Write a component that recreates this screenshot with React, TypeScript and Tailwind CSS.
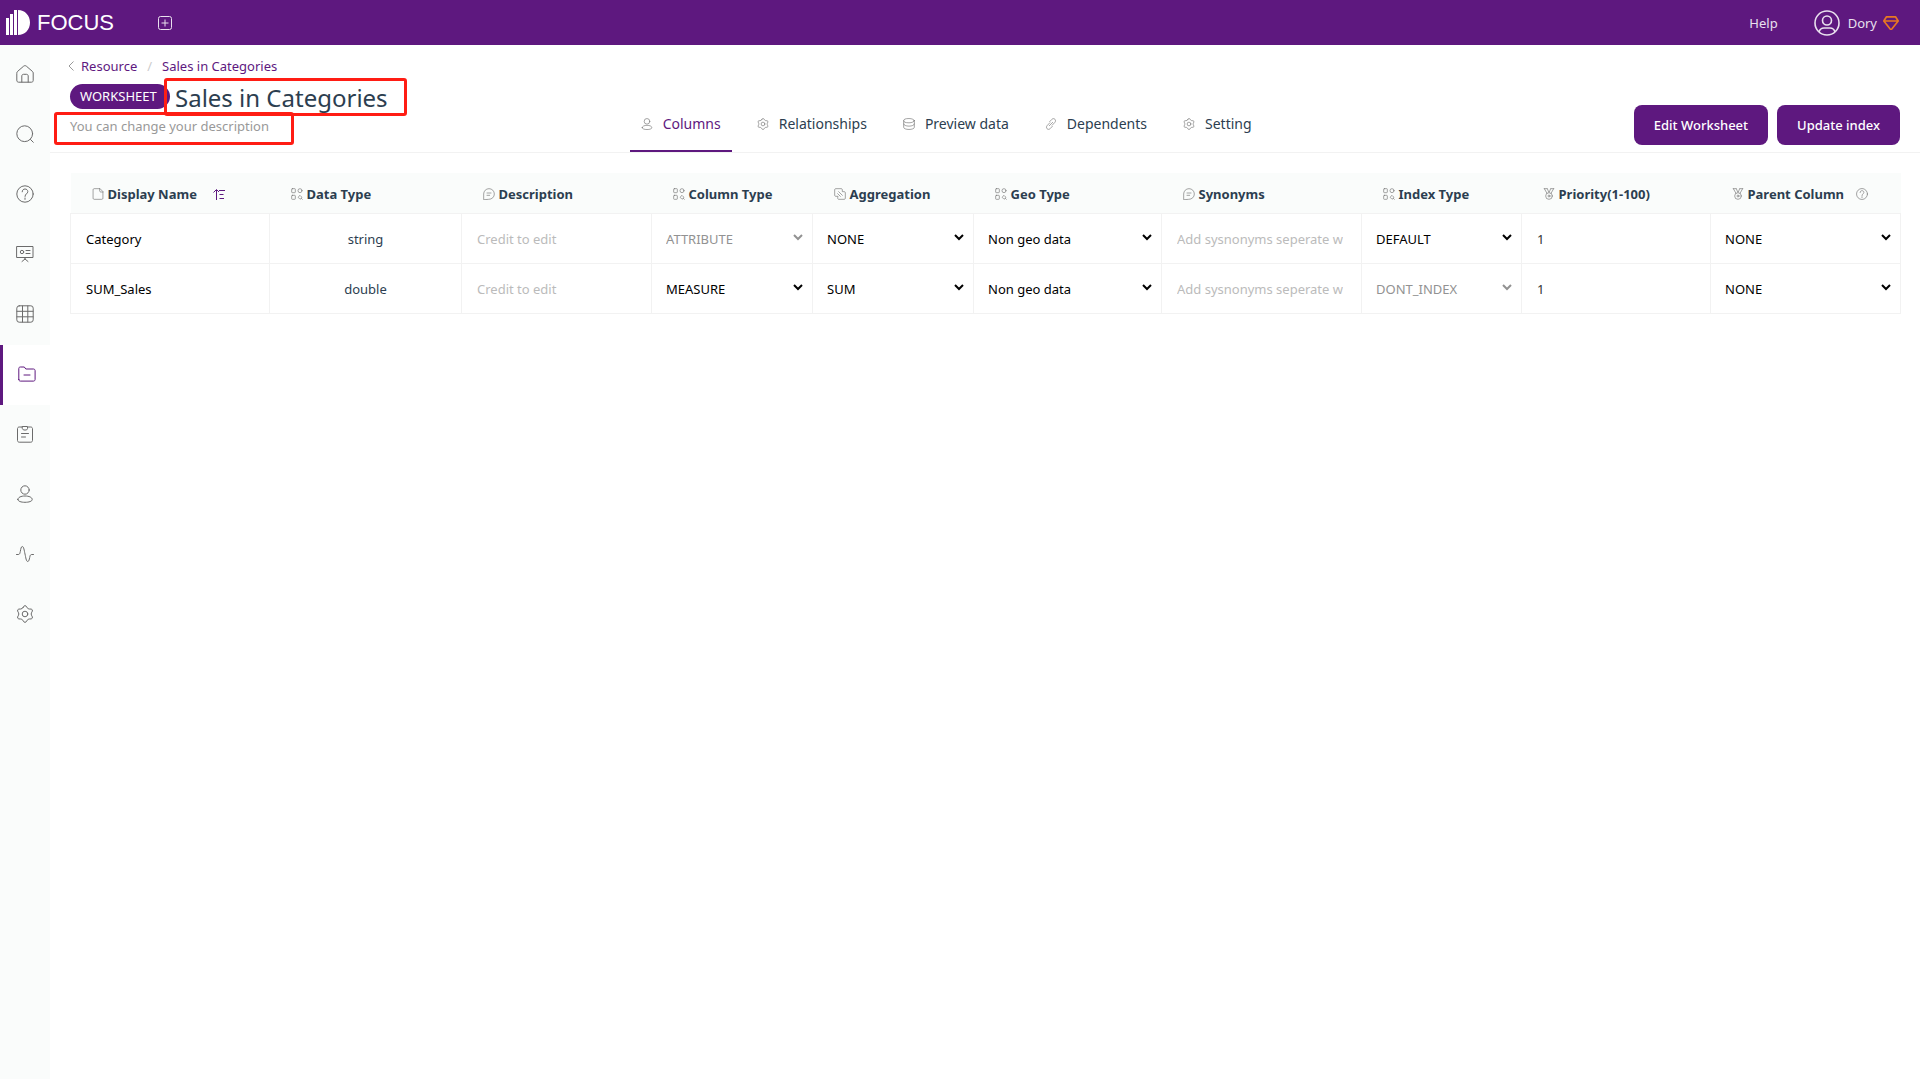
import type { ReactNode } from "react";

type IconName =
  | "home"
  | "search"
  | "help"
  | "board"
  | "grid"
  | "folder"
  | "clipboard"
  | "user"
  | "pulse"
  | "gear"
  | "database"
  | "link"
  | "file"
  | "shapes"
  | "chat"
  | "copy"
  | "medal";

// すべて 18x18 のグリッドで描く
const iconShapes: Record<IconName, ReactNode> = {
  home: (
    <>
      <path d="M.8 8c0-.7.3-1.2.8-1.6l6-5.2c.8-.7 2-.7 2.800 0l6 5.200c.5.400.8.900.8 1.600v7.500c0 1-.7 1.700-1.700 1.700h-13c-1 0-1.700-.7-1.700-1.700z" />
      <path d="M5.800 17v-6c0-1 .7-1.700 1.700-1.700h3c1 0 1.700.7 1.700 1.700v6" />
    </>
  ),
  search: (
    <>
      <circle cx="8.700" cy="8.700" r="7.900" />
      <path d="M14.500 14.500l2.800 2.800" />
    </>
  ),
  help: (
    <>
      <circle cx="9" cy="9" r="8.200" />
      <path d="M6.200 6.800c0-1.700 1.200-2.800 2.800-2.800s2.800 1.100 2.800 2.600c0 2.200-2.800 2.200-2.800 4.800M9 13v1.400" />
    </>
  ),
  board: (
    <>
      <path d="M1 1.500h16v11H1zM9 12.500v2M9 14l-3 2.500M9 14l3 2.500" />
      <circle cx="6" cy="7" r="1.700" />
      <path d="M10 5.500h4M10 8.500h4" />
    </>
  ),
  grid: (
    <>
      <rect x=".8" y=".8" width="16.400" height="16.400" rx="2.400" />
      <path d="M6.500 1v16M11.800 1v16M1 6.300h16M1 11.800h16" />
    </>
  ),
  folder: (
    <>
      <path d="M.8 14.500v-11c0-.9.6-1.500 1.500-1.500h4l1.500 2h7.700c.9 0 1.600.7 1.600 1.600v8.900c0 .9-.7 1.600-1.600 1.600h-13.200c-.9 0-1.500-.7-1.500-1.600z" />
      <path d="M6 10h6" />
    </>
  ),
  clipboard: (
    <>
      <path d="M6 2H3.200C2.300 2 1.500 2.700 1.500 3.600v12c0 .9.800 1.600 1.700 1.600h11.600c.9 0 1.700-.7 1.700-1.600v-12c0-.9-.8-1.600-1.700-1.600H12" />
      <path d="M6.500 1.500h5v2.200l-1 1.300h-3l-1-1.300zM5.500 8.500h7M5.500 12h4" />
    </>
  ),
  user: (
    <>
      <circle cx="9" cy="5" r="4.200" />
      <path d="M1.800 14.500c0-2.200 3.200-3.500 7.200-3.500s7.200 1.300 7.200 3.500c0 1.800-3.200 2.800-7.200 2.800s-7.200-1-7.200-2.800z" />
    </>
  ),
  pulse: (
    <path d="M.5 9.500h1.800c1.400 0 1.500-1 2-3 .5-2.500.8-5 2-5 1.500 0 1.900 4 2.700 7.500s1.200 7.500 2.700 7.500c1.200 0 1.500-2 2-4 .5-2.200.6-3 2-3h1.800" />
  ),
  gear: (
    <>
      <path d="M6.800 2.800Q7.800.6 9 .6T11.200 2.800Q11.950 3.900 13.270 4Q15.670 3.760 16.270 4.800T15.470 7.800Q14.900 9 15.470 10.200Q16.870 12.160 16.270 13.200T13.270 14Q11.950 14.100 11.200 15.200Q10.200 17.400 9 17.400T6.800 15.200Q6.050 14.100 4.730 14Q2.330 14.240 1.730 13.200T2.530 10.200Q3.100 9 2.530 7.800Q1.130 5.840 1.730 4.800T4.730 4Q6.050 3.900 6.800 2.800z" />
      <circle cx="9" cy="9" r="2.800" />
    </>
  ),
  database: (
    <>
      <ellipse cx="9" cy="4" rx="8" ry="3.200" />
      <path d="M1 4v10c0 1.800 3.600 3.200 8 3.200s8-1.400 8-3.200V4M1 9c0 1.800 3.600 3.200 8 3.200s8-1.400 8-3.200" />
    </>
  ),
  link: (
    <>
      <path d="M7 5.500l3.200-3.400c1.500-1.500 3.500-1.500 4.700-.2s1.200 3.300-.2 4.800l-4 4.200" />
      <path d="M11 12.500l-3.200 3.400c-1.500 1.500-3.500 1.500-4.700.2s-1.200-3.300.2-4.800l4-4.200M6.500 11.500l5-5" />
    </>
  ),
  file: (
    <path d="M11.500 1H3.200C2.300 1 1.600 1.700 1.600 2.600v12.800c0 .9.700 1.600 1.600 1.600h11.600c.9 0 1.600-.7 1.600-1.600V6zM11.500 1v3.400c0 .9.700 1.600 1.600 1.600h3.300" />
  ),
  shapes: (
    <>
      <rect x="1" y="1" width="5.500" height="6" rx="1" />
      <rect x="1" y="11" width="5.500" height="6" rx="1" />
      <circle cx="13.500" cy="4" r="3" />
      <path d="M11 13.500l2.500-2.500 3 3-2.500 2.500zM15.500 15.500l1.500 1.500" />
    </>
  ),
  chat: (
    <>
      <path d="M1 17V9c0-4.500 3.500-8 8-8s8 3.500 8 8-3.500 8-8 8z" />
      <path d="M6 7.500h6M6 11h4" />
    </>
  ),
  copy: (
    <>
      <path d="M5.500 12.500H2.600C1.700 12.500 1 11.800 1 11V2.600C1 1.700 1.700 1 2.600 1H11c.8 0 1.500.7 1.500 1.600v2.900h2.900c.9 0 1.600.7 1.600 1.600v8.300c0 .9-.7 1.600-1.600 1.600H7.100c-.9 0-1.600-.7-1.600-1.600z" />
      <path d="M5.500 8.500l4 4M7 5.500l5.500 5.500" />
    </>
  ),
  medal: (
    <>
      <circle cx="9" cy="12" r="5" />
      <circle cx="9" cy="12" r="1.500" />
      <path d="M2 1l4 7M6.500 1l2 5M16 1l-4 7M11.500 1l-2 5M2 1h4M12 1h4" />
    </>
  ),
};

function Icon({ name, className }: { name: IconName; className: string }) {
  return (
    <svg
      viewBox="0 0 18 18"
      fill="none"
      stroke="currentColor"
      strokeLinecap="round"
      strokeLinejoin="round"
      className={`shrink-0 ${className}`}
      aria-hidden="true"
    >
      {iconShapes[name]}
    </svg>
  );
}

const navItems: { icon: IconName; label: string }[] = [
  { icon: "home", label: "Home" },
  { icon: "search", label: "Search" },
  { icon: "help", label: "Questions" },
  { icon: "board", label: "Boards" },
  { icon: "grid", label: "Tables" },
  { icon: "folder", label: "Resource" },
  { icon: "clipboard", label: "Tasks" },
  { icon: "user", label: "Users" },
  { icon: "pulse", label: "Activity" },
  { icon: "gear", label: "Settings" },
];

const tabs: { icon: IconName; label: string }[] = [
  { icon: "user", label: "Columns" },
  { icon: "gear", label: "Relationships" },
  { icon: "database", label: "Preview data" },
  { icon: "link", label: "Dependents" },
  { icon: "gear", label: "Setting" },
];

const columns: { icon: IconName; label: string; width: string }[] = [
  { icon: "file", label: "Display Name", width: "w-[199px]" },
  { icon: "shapes", label: "Data Type", width: "w-[192px]" },
  { icon: "chat", label: "Description", width: "w-[190px]" },
  { icon: "shapes", label: "Column Type", width: "w-[161px]" },
  { icon: "copy", label: "Aggregation", width: "w-[161px]" },
  { icon: "shapes", label: "Geo Type", width: "w-[188px]" },
  { icon: "chat", label: "Synonyms", width: "w-[200px]" },
  { icon: "shapes", label: "Index Type", width: "w-[160px]" },
  { icon: "medal", label: "Priority(1-100)", width: "w-[189px]" },
  { icon: "medal", label: "Parent Column", width: "w-[190px]" },
];

const rows = [
  {
    name: "Category",
    dataType: "string",
    columnType: "ATTRIBUTE",
    columnTypeLocked: true,
    aggregation: "NONE",
    indexType: "DEFAULT",
    indexTypeLocked: false,
  },
  {
    name: "SUM_Sales",
    dataType: "double",
    columnType: "MEASURE",
    columnTypeLocked: false,
    aggregation: "SUM",
    indexType: "DONT_INDEX",
    indexTypeLocked: true,
  },
];

function SelectCell({
  label,
  value,
  disabled = false,
}: {
  label: string;
  value: string;
  disabled?: boolean;
}) {
  return (
    <td className="border border-[#f2f2f2] p-0">
      <div
        className={`relative ${disabled ? "text-[#929292]" : "text-black"}`}
      >
        <select
          aria-label={label}
          disabled={disabled}
          defaultValue={value}
          className="h-12 w-full appearance-none bg-transparent pl-[14px] pr-8 pt-0.5 opacity-100"
        >
          <option>{value}</option>
        </select>
        <svg
          viewBox="0 0 10 7"
          fill="none"
          stroke="currentColor"
          strokeWidth="2"
          className="pointer-events-none absolute right-[9px] top-5 h-[7px] w-[10px]"
          aria-hidden="true"
        >
          <path d="M1 1l4 4 4-4" />
        </svg>
      </div>
    </td>
  );
}

function InputCell({
  label,
  value,
  placeholder,
}: {
  label: string;
  value?: string;
  placeholder?: string;
}) {
  return (
    <td className="border border-[#f2f2f2] py-0 pl-[15px] pr-[18px]">
      <input
        aria-label={label}
        defaultValue={value}
        placeholder={placeholder}
        className="block h-12 w-full bg-transparent pt-0.5 text-[#333] outline-none placeholder:text-[#bbb]"
      />
    </td>
  );
}

function TopBar() {
  return (
    <header className="flex h-[45px] items-center bg-[#5e187f] text-[#e9e0ee]">
      <a href="#" className="flex items-center gap-[7px] pl-[6px] text-white">
        <svg
          viewBox="0 0 24 25"
          fill="currentColor"
          className="h-[25px] w-6"
          aria-hidden="true"
        >
          <path d="M0 8h3v17H0zM4 4h3v21H4zM8 0h3v25H8zM12 0c7 0 12 5.500 12 12.500S19 25 12 25z" />
        </svg>
        <span className="font-['Liberation_Sans',sans-serif] text-[22px] leading-6">
          FOCUS
        </span>
      </a>
      <button type="button" aria-label="New" className="ml-11">
        <svg
          viewBox="0 0 14 14"
          fill="none"
          stroke="currentColor"
          className="size-[14px]"
          aria-hidden="true"
        >
          <rect x=".5" y=".5" width="13" height="13" rx="2" />
          <path d="M7 3.500v7M3.500 7h7" />
        </svg>
      </button>
      <a href="#" className="ml-auto">
        Help
      </a>
      <button type="button" className="ml-9 mr-[21px] flex items-center">
        <svg
          viewBox="0 0 26 26"
          fill="none"
          stroke="currentColor"
          strokeWidth="1.600"
          className="size-[26px]"
          aria-hidden="true"
        >
          <circle cx="13" cy="13" r="12" />
          <circle cx="13" cy="10.500" r="4.500" />
          <path d="M5 22c1-3.500 3.500-4 5-4h6c1.500 0 4 .5 5 4" />
        </svg>
        <span className="ml-2">Dory</span>
        <svg
          viewBox="0 0 16 14"
          fill="none"
          stroke="#e87722"
          strokeWidth="1.700"
          strokeLinejoin="round"
          className="ml-[6px] h-[14px] w-4"
          aria-hidden="true"
        >
          <path d="M3.500.8h9L15.200 5 9 12.800c-.6.6-1.400.6-2 0L.8 5zM1 5h14" />
        </svg>
      </button>
    </header>
  );
}

function SideNav() {
  return (
    <nav className="w-[50px] shrink-0 bg-[#fafcfb]">
      {navItems.map((item) => (
        <a
          key={item.icon}
          href="#"
          aria-label={item.label}
          className={
            item.icon === "folder"
              ? "flex h-[60px] items-center justify-center border-l-[3px] border-[#5e187f] bg-white pb-0.5 text-[#5e187f]"
              : "flex h-[60px] items-center justify-center pb-0.5 text-[#6b6b6b]"
          }
        >
          <Icon name={item.icon} className="size-[18px]" />
        </a>
      ))}
    </nav>
  );
}

function PageHeader() {
  return (
    <div className="grid h-[108px] grid-cols-[31%_auto_1fr] border-b border-[#f2f2f2]">
      <div className="pl-5 pt-[9px]">
        <div className="flex items-center text-[#5e187f]">
          <svg
            viewBox="0 0 6 10"
            fill="none"
            stroke="#999"
            className="-ml-[2px] mr-[7px] h-[10px] w-[6px]"
            aria-hidden="true"
          >
            <path d="M5.500.5L1 5l4.500 4.500" />
          </svg>
          <a href="#">Resource</a>
          <span className="mx-[10px] text-[#ccc]">/</span>
          <a href="#">Sales in Categories</a>
        </div>
        <div className="flex h-9 items-center">
          <span className="flex h-[25px] w-[100px] items-center rounded-full bg-[#5e187f] pl-[10px] text-white">
            WORKSHEET
          </span>
          <h1 className="relative ml-[5px] whitespace-nowrap pt-1 text-[24px] leading-8 text-[#2c3e50]">
            Sales in Categories
            <span className="absolute -left-[11px] -right-[19px] top-0 h-[38px] rounded-[3px] border-3 border-[#ff1d14]" />
          </h1>
        </div>
        <p className="relative mt-0.5 w-fit leading-5 text-[#999]">
          You can change your description
          <span className="absolute -left-4 -right-[25px] -top-1 h-[33px] rounded-[3px] border-3 border-[#ff1d14]" />
        </p>
      </div>
      <div role="tablist" className="flex items-end gap-[14px] text-sm">
        {tabs.map((tab, index) => (
          <button
            key={tab.label}
            type="button"
            role="tab"
            aria-selected={index === 0}
            className={
              index === 0
                ? "flex h-14 items-center gap-[10px] border-b-2 border-[#5e187f] px-[11px] pt-0.5 text-[#5e187f]"
                : "flex h-14 items-center gap-[10px] border-b-2 border-transparent px-[11px] pt-0.5 text-[#2c3e50]"
            }
          >
            <Icon name={tab.icon} className="size-3 text-[#777]" />
            {tab.label}
          </button>
        ))}
      </div>
      <div className="flex items-end justify-end gap-[9px] pb-[7px] pr-5 text-white">
        <button
          type="button"
          className="h-10 rounded-lg bg-[#5e187f] px-5 font-medium"
        >
          Edit Worksheet
        </button>
        <button
          type="button"
          className="h-10 rounded-lg bg-[#5e187f] px-5 font-medium"
        >
          Update index
        </button>
      </div>
    </div>
  );
}

function ColumnTable() {
  return (
    <table className="w-full table-fixed border-collapse">
      <thead className="bg-[#fafcfb] text-[#2c3e50]">
        <tr className="h-10">
          {columns.map((column) => (
            <th
              key={column.label}
              className={`p-0 text-left font-bold ${column.width}`}
            >
              <div className="flex items-center whitespace-nowrap pl-[21px] pt-0.5">
                <Icon name={column.icon} className="mr-1 size-3 text-[#777]" />
                {column.label}
                {column.label === "Display Name" && (
                  <button type="button" aria-label="Sort" className="ml-4">
                    <svg
                      viewBox="0 0 12 12"
                      fill="none"
                      stroke="#5e187f"
                      className="h-3 w-3"
                      aria-hidden="true"
                    >
                      <path d="M3.500 12V2M.5 4.500L3.500 1.500 6 4M6 2.500h6M6.500 6.500h4M6.500 10.500h4.500" />
                    </svg>
                  </button>
                )}
                {column.label === "Parent Column" && (
                  <Icon name="help" className="ml-3 size-3 text-[#777]" />
                )}
              </div>
            </th>
          ))}
        </tr>
      </thead>
      <tbody>
        {rows.map((row) => (
          <tr key={row.name} className="h-[50px]">
            <td className="border border-[#f2f2f2] px-[15px] pb-0 pt-0.5 text-black">
              {row.name}
            </td>
            <td className="border border-[#f2f2f2] pb-0 pt-0.5 text-center text-[#2c3e50]">
              {row.dataType}
            </td>
            <InputCell label="Description" placeholder="Credit to edit" />
            <SelectCell
              label="Column Type"
              value={row.columnType}
              disabled={row.columnTypeLocked}
            />
            <SelectCell label="Aggregation" value={row.aggregation} />
            <SelectCell label="Geo Type" value="Non geo data" />
            <InputCell
              label="Synonyms"
              placeholder="Add sysnonyms seperate with commas"
            />
            <SelectCell
              label="Index Type"
              value={row.indexType}
              disabled={row.indexTypeLocked}
            />
            <InputCell label="Priority" value="1" />
            <SelectCell label="Parent Column" value="NONE" />
          </tr>
        ))}
      </tbody>
    </table>
  );
}

export default function App() {
  return (
    <div className="flex min-h-screen flex-col bg-white font-['Noto_Sans',sans-serif] text-[13px] leading-6">
      <TopBar />
      <div className="flex grow">
        <SideNav />
        <main className="min-w-0 grow">
          <PageHeader />
          <div className="px-5 pt-5">
            <ColumnTable />
          </div>
        </main>
      </div>
    </div>
  );
}
